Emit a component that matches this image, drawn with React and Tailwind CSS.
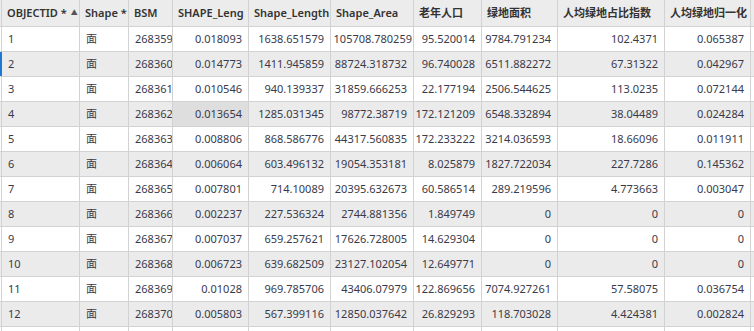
import React from 'react';

const columns = [
  { title: 'OBJECTID *', w: 'w-[78px]', sort: true },
  { title: 'Shape *', w: 'w-[49px]' },
  { title: 'BSM', w: 'w-[44px]' },
  { title: 'SHAPE_Leng', w: 'w-[76px]' },
  { title: 'Shape_Length', w: 'w-[82px]' },
  { title: 'Shape_Area', w: 'w-[83px]' },
  { title: '老年人口', w: 'w-[68px]' },
  { title: '绿地面积', w: 'w-[76px]' },
  { title: '人均绿地占比指数', w: 'w-[107px]' },
  { title: '人均绿地归一化', w: 'w-[86px]' },
];

const rows = [
  ['1', '面', '268359', '0.018093', '1638.651579', '105708.780259', '95.520014', '9784.791234', '102.4371', '0.065387'],
  ['2', '面', '268360', '0.014773', '1411.945859', '88724.318732', '96.740028', '6511.882272', '67.31322', '0.042967'],
  ['3', '面', '268361', '0.010546', '940.139337', '31859.666253', '22.177194', '2506.544625', '113.0235', '0.072144'],
  ['4', '面', '268362', '0.013654', '1285.031345', '98772.38719', '172.121209', '6548.332894', '38.04489', '0.024284'],
  ['5', '面', '268363', '0.008806', '868.586776', '44317.560835', '172.233222', '3214.036593', '18.66096', '0.011911'],
  ['6', '面', '268364', '0.006064', '603.496132', '19054.353181', '8.025879', '1827.722034', '227.7286', '0.145362'],
  ['7', '面', '268365', '0.007801', '714.10089', '20395.632673', '60.586514', '289.219596', '4.773663', '0.003047'],
  ['8', '面', '268366', '0.002237', '227.536324', '2744.881356', '1.849749', '0', '0', '0'],
  ['9', '面', '268367', '0.007037', '659.257621', '17626.728005', '14.629304', '0', '0', '0'],
  ['10', '面', '268368', '0.006723', '639.682509', '23127.102054', '12.649771', '0', '0', '0'],
  ['11', '面', '268369', '0.01028', '969.785706', '43406.07979', '122.869656', '7074.927261', '57.58075', '0.036754'],
  ['12', '面', '268370', '0.005803', '567.399116', '12850.037642', '26.829293', '118.703028', '4.424381', '0.002824'],
];

const font = { fontFamily: '"Noto Sans", "Noto Sans CJK SC", sans-serif' };

const App = () => {
  return (
    <div className="w-[754px] h-[331px] overflow-hidden bg-white text-[11px] text-[#3a3a4a]" style={font}>
      {/* encabezado */}
      <div className="flex h-[27px] bg-[#ececec] border-b border-[#d2d2d2] pl-[1px]">
        <div className="w-[1px] bg-[#d2d2d2]" />
        {columns.map((c, i) => (
          <div key={i} className={`${c.w} shrink-0 flex items-center px-[5px] border-r border-[#d2d2d2] font-semibold text-[#333] whitespace-nowrap overflow-hidden`}>
            {c.title}
            {c.sort ? <span className="ml-[4px] text-[7px] text-[#555]">▲</span> : null}
          </div>
        ))}
        <div className="flex-1 bg-[#ececec]" />
      </div>

      {rows.map((r, ri) => (
        <div key={ri} className={`relative flex h-[25px] border-b border-[#d2d2d2] pl-[1px] ${ri % 2 === 1 ? 'bg-[#ebebeb]' : 'bg-white'}`}>
          {ri === 1 ? <div className="absolute left-0 top-0 h-full w-[2px] bg-[#1e78d2]" /> : null}
          <div className="w-[1px] bg-[#d2d2d2]" />
          {r.map((v, ci) => {
            const right = ci > 2;
            const hover = ri === 3 && ci === 3;
            const tight = v.length >= 13;
            return (
              <div
                key={ci}
                className={`${columns[ci].w} shrink-0 flex items-center ${tight ? 'px-[1px]' : 'px-[6px]'} border-r border-[#d2d2d2] whitespace-nowrap overflow-hidden ${right ? 'justify-end' : ''} ${hover ? 'bg-[#dedede]' : ''}`}
              >
                {v}
              </div>
            );
          })}
          <div className="flex-1" />
        </div>
      ))}

      <div className="flex h-[25px] pl-[1px]">
        <div className="w-[1px] bg-[#d2d2d2]" />
        {columns.map((c, i) => (
          <div key={i} className={`${c.w} shrink-0 border-r border-[#d2d2d2]`} />
        ))}
      </div>
    </div>
  );
};

export default App;
